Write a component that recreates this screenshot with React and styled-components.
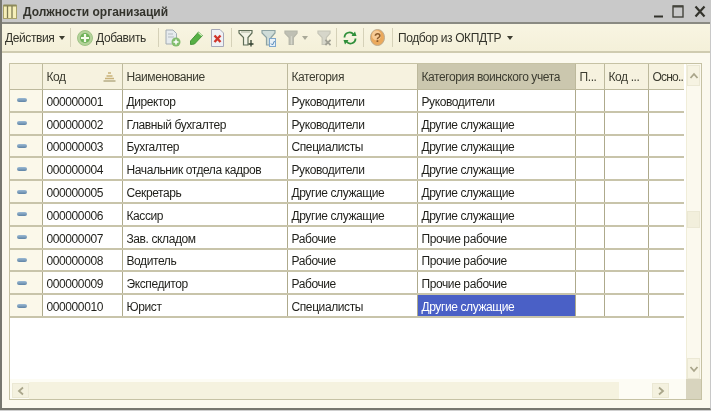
import React from "react";
import styled, { createGlobalStyle } from "styled-components";

const Global = createGlobalStyle`
  html, body { margin: 0; padding: 0; background: #cfcfcf; }
  * { box-sizing: border-box; }
`;

const Window = styled.div`
  width: 711px;
  height: 410px;
  display: flex;
  flex-direction: column;
  overflow: hidden;
  background: #fbf9ee;
  border-left: 2px solid #77776f;
  border-bottom: 2px solid #77776f;
  border-right: 1px solid #c8c8c8;
  font-family: "Liberation Sans", Arial, sans-serif;
  font-size: 12px;
  letter-spacing: -0.4px;
  color: #2a2a22;
  filter: blur(0.35px);
`;

const TitleBar = styled.div`
  height: 24px;
  flex: none;
  display: flex;
  align-items: center;
  padding: 1px 4px 0 1px;
  background: #c9c9c9;
  border-bottom: 2px solid #8a8a82;
`;

const Title = styled.div`
  margin-left: 5px;
  font-weight: bold;
  font-size: 12px;
  letter-spacing: 0;
  color: #33332c;
  flex: 1;
`;

const WinControls = styled.div`
  display: flex;
  align-items: center;
  gap: 8px;
  margin-top: 0;
`;

const Toolbar = styled.div`
  height: 29px;
  flex: none;
  display: flex;
  align-items: center;
  padding: 0 0 0 3px;
  background: linear-gradient(#f8f5e2, #f4f0d9);
  border-bottom: 2px solid #cfcbb0;
  color: #33332a;
`;

const ToolText = styled.span`
  font-size: 12px;
  white-space: nowrap;
  margin-left: ${(p) => p.$ml || 0}px;
  width: ${(p) => (p.$w ? `${p.$w}px` : "auto")};
`;

const Caret = styled.span`
  width: 0;
  height: 0;
  flex: none;
  margin-left: ${(p) => p.$ml || 5}px;
  border-left: 3px solid transparent;
  border-right: 3px solid transparent;
  border-top: 4px solid ${(p) => p.$color || "#3d3d30"};
`;

const Sep = styled.span`
  width: 1px;
  height: 19px;
  flex: none;
  background: #d5d1b8;
  margin: 0 ${(p) => p.$r}px 0 ${(p) => p.$l}px;
`;

const ToolIcon = styled.svg`
  flex: none;
  margin-left: ${(p) => p.$ml || 0}px;
`;

const Content = styled.div`
  flex: 1;
  min-height: 0;
  padding: 10px 8px 8px 7px;
`;

const Frame = styled.div`
  height: 100%;
  display: grid;
  grid-template-columns: 1fr 15px;
  grid-template-rows: 1fr 20px;
  border: 1px solid #c6c2a4;
  background: #fff;
`;

const TableArea = styled.div`
  overflow: hidden;
  background: #fff;
`;

const Table = styled.table`
  width: 674px;
  table-layout: fixed;
  border-collapse: collapse;
`;

const HeadCell = styled.th`
  height: 25px;
  padding: 1px 0 0 4px;
  font-weight: normal;
  text-align: left;
  font-size: 12px;
  white-space: nowrap;
  overflow: hidden;
  letter-spacing: ${(p) => (p.$tight ? "-0.8px" : "inherit")};
  color: #3c3c30;
  background: ${(p) => (p.$active ? "#cbc7ae" : "#f6f2df")};
  border-right: 1px solid #bdb99c;
  border-bottom: 1px solid #bdb99c;
  &:last-child { border-right: none; }
`;

const HeadInner = styled.div`
  display: flex;
  align-items: center;
  justify-content: space-between;
  padding-right: 6px;
`;

const Row = styled.tr`
  height: 22.8px;
`;

const Cell = styled.td`
  padding: 3px 0 0 4px;
  font-size: 12px;
  white-space: nowrap;
  overflow: hidden;
  color: ${(p) => (p.$sel ? "#fff" : "#1f1f1a")};
  background: ${(p) => (p.$sel ? "#4a60c6" : p.$mark ? "#fbf8ea" : "#fff")};
  border-right: 1px solid #aeaa8c;
  border-bottom: 2px solid #c8c4aa;
  &:last-child { border-right: none; }
`;

const Pill = styled.div`
  width: 10px;
  height: 4px;
  margin: 0 0 3px 3px;
  border-radius: 2px;
  background: linear-gradient(#9cbad4, #5f84a6);
`;

const VScroll = styled.div`
  display: flex;
  flex-direction: column;
  padding: 1px 2px 0 0;
  background: #fbf9ee;
  border-left: 1px solid #f0edd9;
`;

const ScrollBtn = styled.div`
  width: 13px;
  height: 21px;
  flex: none;
  display: flex;
  align-items: center;
  justify-content: center;
  background: #f6f3e2;
  border: 1px solid #ebe8d4;
`;

const VThumb = styled.div`
  width: 13px;
  height: 17px;
  margin-top: 125px;
  background: #f2efdc;
  border: 1px solid #ebe8d4;
`;

const Spacer = styled.div`
  flex: 1;
`;

const HScroll = styled.div`
  display: flex;
  align-items: center;
  padding: 3px 17px 0 2px;
  background: #fdfcf4;
`;

const HBtn = styled.div`
  width: 17px;
  height: 15px;
  flex: none;
  display: flex;
  align-items: center;
  justify-content: center;
  background: #f4f1df;
  border: 1px solid #ebe8d4;
`;

const HThumb = styled.div`
  width: 590px;
  height: 17px;
  flex: none;
  background: #f5f2df;
`;

const Corner = styled.div`
  background: #d8d4be;
`;

const Columns = [32, 80, 165, 130, 158, 29, 44, 36];

const rows = [
  ["000000001", "Директор", "Руководители", "Руководители"],
  ["000000002", "Главный бухгалтер", "Руководители", "Другие служащие"],
  ["000000003", "Бухгалтер", "Специалисты", "Другие служащие"],
  ["000000004", "Начальник отдела кадров", "Руководители", "Другие служащие"],
  ["000000005", "Секретарь", "Другие служащие", "Другие служащие"],
  ["000000006", "Кассир", "Другие служащие", "Другие служащие"],
  ["000000007", "Зав. складом", "Рабочие", "Прочие рабочие"],
  ["000000008", "Водитель", "Рабочие", "Прочие рабочие"],
  ["000000009", "Экспедитор", "Рабочие", "Прочие рабочие"],
  ["000000010", "Юрист", "Специалисты", "Другие служащие"],
];

const Chevron = ({ dir }) => {
  const d = {
    up: "M1.5 7 L5 3 L8.5 7",
    down: "M1.5 3 L5 7 L8.5 3",
    left: "M7 1.5 L3 5 L7 8.5",
    right: "M3 1.5 L7 5 L3 8.5",
  }[dir];
  return (
    <svg width="10" height="10" viewBox="0 0 10 10">
      <path d={d} fill="none" stroke="#a9a58a" strokeWidth="1.8" />
    </svg>
  );
};

const funnel = "M1 1.5 H14 V4 L10 8.5 V16 H5.5 V8.5 L1 4 Z";

export default function App() {
  return (
    <>
      <Global />
      <Window>
        <TitleBar>
          <svg width="15" height="16" viewBox="0 0 15 16">
            <rect x="0.5" y="1.5" width="13" height="13" fill="#f6efb8" stroke="#a9a26a" />
            <path d="M0.5 1.5 H13.5" stroke="#8d8a5a" strokeWidth="2" />
            <path d="M4.5 2 V14 M9 2 V14" stroke="#7d7a54" strokeWidth="1.3" />
          </svg>
          <Title>Должности организаций</Title>
          <WinControls>
            <svg width="11" height="13" viewBox="0 0 11 13">
              <path d="M1 11.5 H10" stroke="#33332c" strokeWidth="2" />
            </svg>
            <svg width="12" height="13" viewBox="0 0 12 13">
              <rect x="1" y="1" width="10" height="11" fill="none" stroke="#44443c" strokeWidth="1.4" />
              <path d="M1 1.5 H11" stroke="#44443c" strokeWidth="2" />
            </svg>
            <svg width="12" height="13" viewBox="0 0 12 13" style={{ marginLeft: 2 }}>
              <path d="M1.5 1.5 L10.5 11.5 M10.5 1.5 L1.5 11.5" stroke="#33332c" strokeWidth="2.2" />
            </svg>
          </WinControls>
        </TitleBar>

        <Toolbar>
          <ToolText $w={49}>Действия</ToolText>
          <Caret />
          <Sep $l={5} $r={6} />
          <ToolIcon width="16" height="16" viewBox="0 0 16 16">
            <circle cx="8" cy="8" r="7.5" fill="#b4d39a" stroke="#a0c486" />
            <circle cx="8" cy="8" r="5" fill="#6fb25a" />
            <path d="M8 4 V12 M4 8 H12" stroke="#f4fbea" strokeWidth="2.2" />
          </ToolIcon>
          <ToolText $ml={3} $w={49}><u>Д</u>обавить</ToolText>
          <Sep $l={13} $r={6} />
          <ToolIcon width="16" height="18" viewBox="0 0 16 18">
            <path d="M1 1 H8 L11.5 4.5 V15 H1 Z" fill="#e6ebee" stroke="#a3acb2" />
            <path d="M3 5 H8 M3 8 H9" stroke="#b4bbc0" />
            <circle cx="11" cy="13" r="4.5" fill="#82bd6c" />
            <path d="M11 10.5 V15.5 M8.5 13 H13.5" stroke="#fff" strokeWidth="1.5" />
          </ToolIcon>
          <ToolIcon $ml={9} width="13" height="14" viewBox="0 0 13 14">
            <path d="M0.5 10 L8.5 1 L12.5 4.5 L4.5 13 L0.5 13.5 Z" fill="#56b044" stroke="#46953a" />
            <path d="M8.5 1.5 L12 4.8" stroke="#d4ecbe" strokeWidth="1.5" />
          </ToolIcon>
          <ToolIcon $ml={8} width="13" height="18" viewBox="0 0 13 18">
            <path d="M0.5 0.5 H9 L12.5 4 V17.5 H0.5 Z" fill="#eff1f5" stroke="#a6a8b8" />
            <path d="M3.5 6.5 L9.5 13 M9.5 6.5 L3.5 13" stroke="#d0352a" strokeWidth="2.4" />
          </ToolIcon>
          <Sep $l={7} $r={6} />
          <ToolIcon width="16" height="18" viewBox="0 0 16 18">
            <path d={funnel} fill="#f2f3e6" stroke="#5f6e58" strokeWidth="1.2" />
            <path d="M3 3 H12" stroke="#b5bdaa" strokeWidth="1.2" />
            <path d="M10.5 15 H15.5 M13 11 V17.5" stroke="#2f3f2e" strokeWidth="1.3" />
          </ToolIcon>
          <ToolIcon $ml={7} width="15" height="18" viewBox="0 0 15 18">
            <path d={funnel} fill="#cfdcd8" stroke="#8ea3a3" strokeWidth="1.2" />
            <rect x="8.5" y="9.5" width="6" height="8" fill="#e8f0f6" stroke="#7ea6cc" />
            <path d="M10 14.5 L11.5 16 L13.5 12" fill="none" stroke="#4f86b8" strokeWidth="1" />
          </ToolIcon>
          <ToolIcon $ml={8} width="14" height="18" viewBox="0 0 15 18">
            <path d={funnel} fill="#bfc0b4" stroke="#b4b5a8" strokeWidth="1.2" />
            <path d="M8 7 V16" stroke="#d6d6ca" strokeWidth="1.4" />
          </ToolIcon>
          <Caret $ml={4} $color="#a9a998" />
          <ToolIcon $ml={9} width="14" height="18" viewBox="0 0 15 18">
            <path d={funnel} fill="#d6d6ca" stroke="#c4c4b6" strokeWidth="1.2" />
            <path d="M9 11 L14.5 16.5 M14.5 11 L9 16.5" stroke="#a0a094" strokeWidth="1.9" />
          </ToolIcon>
          <Sep $l={5} $r={6} />
          <ToolIcon width="14" height="14" viewBox="0 0 14 14">
            <path d="M1.5 6.5 A5 5 0 0 1 10.5 3.5" fill="none" stroke="#2f8f3a" strokeWidth="1.8" />
            <path d="M12.5 7.5 A5 5 0 0 1 3.5 10.5" fill="none" stroke="#2f8f3a" strokeWidth="1.8" />
            <path d="M8.5 5 H13.5 L12 0.5 Z M5.5 9 H0.5 L2 13.5 Z" fill="#2f8f3a" />
          </ToolIcon>
          <Sep $l={6} $r={6} />
          <ToolIcon width="15" height="17" viewBox="0 0 15 17">
            <ellipse cx="7.5" cy="8.5" rx="7" ry="8" fill="#eba95c" stroke="#bcab90" />
            <ellipse cx="6.5" cy="6.5" rx="4.5" ry="5" fill="#f7cb96" />
            <text x="7.5" y="13" textAnchor="middle" fontSize="12" fontWeight="bold" fontFamily="Liberation Sans" fill="#8a5a2a">?</text>
          </ToolIcon>
          <Sep $l={7} $r={5} />
          <ToolText>Подбор из ОКПДТР</ToolText>
          <Caret $ml={6} />
        </Toolbar>

        <Content>
          <Frame>
            <TableArea>
              <Table>
                <colgroup>
                  {Columns.map((w, i) => (
                    <col key={i} style={{ width: w }} />
                  ))}
                </colgroup>
                <thead>
                  <tr>
                    <HeadCell />
                    <HeadCell>
                      <HeadInner>
                        Код
                        <svg width="13" height="11" viewBox="0 0 13 11">
                          <path d="M5 2 H8 M3.5 5 H9.5 M2 7.5 H11" stroke="#c9b27a" strokeWidth="1.3" />
                          <path d="M0.5 10 H12.5" stroke="#a79a70" strokeWidth="1.2" />
                        </svg>
                      </HeadInner>
                    </HeadCell>
                    <HeadCell>Наименование</HeadCell>
                    <HeadCell>Категория</HeadCell>
                    <HeadCell $active>Категория воинского учета</HeadCell>
                    <HeadCell>П...</HeadCell>
                    <HeadCell>Код ...</HeadCell>
                    <HeadCell $tight>Осно..</HeadCell>
                  </tr>
                </thead>
                <tbody>
                  {rows.map((r, i) => (
                    <Row key={r[0]}>
                      <Cell $mark><Pill /></Cell>
                      <Cell>{r[0]}</Cell>
                      <Cell>{r[1]}</Cell>
                      <Cell>{r[2]}</Cell>
                      <Cell $sel={i === 9}>{r[3]}</Cell>
                      <Cell />
                      <Cell />
                      <Cell />
                    </Row>
                  ))}
                </tbody>
              </Table>
            </TableArea>
            <VScroll>
              <ScrollBtn><Chevron dir="up" /></ScrollBtn>
              <VThumb />
              <Spacer />
              <ScrollBtn><Chevron dir="down" /></ScrollBtn>
            </VScroll>
            <HScroll>
              <HBtn><Chevron dir="left" /></HBtn>
              <HThumb />
              <Spacer />
              <HBtn><Chevron dir="right" /></HBtn>
            </HScroll>
            <Corner />
          </Frame>
        </Content>
      </Window>
    </>
  );
}
